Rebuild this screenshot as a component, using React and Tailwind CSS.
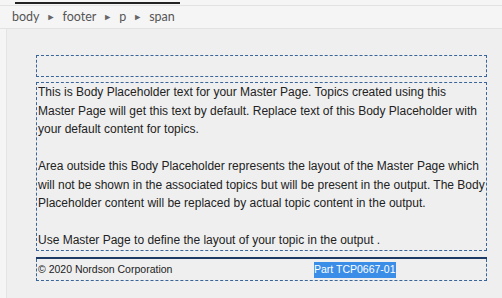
export default function App() {
  return (
    <div className="w-[502px] h-[298px] overflow-hidden bg-[#efefef] flex flex-col">
      <div className="h-[5px] bg-[#f5f5f5] pl-[15px] pt-[2px] shrink-0">
        <div className="w-[165px] h-[2px] bg-[#222]" />
      </div>
      <div className="h-[24px] shrink-0 bg-[#f5f5f5] border-y border-[#e2e2e2] flex items-center pl-[12px] gap-[7px] text-[12.5px] text-[#555] font-['Lato',sans-serif]">
        <span>body</span>
        <span className="text-[9px] text-[#666]">►</span>
        <span>footer</span>
        <span className="text-[9px] text-[#666]">►</span>
        <span>p</span>
        <span className="text-[9px] text-[#666]">►</span>
        <span>span</span>
      </div>
      <div className="flex flex-1">
        <div className="w-[7px] bg-[#f5f5f5] border-r border-[#e4e4e4] shrink-0" />
        <div className="pl-[29px] pt-[26px] flex flex-col font-['Liberation_Sans',Arial,sans-serif] text-[#222]">
          <div className="w-[451px] h-[22px] border border-dashed border-[#3a659a]" />
          <div className="w-[451px] mt-[5px] border border-dashed border-[#3a659a] pl-[1px] text-[12px] leading-[18.5px] whitespace-nowrap">
            <p>
              This is Body Placeholder text for your Master Page. Topics created using this
              <br />
              Master Page will get this text by default. Replace text of this Body Placeholder with
              <br />
              your default content for topics.
            </p>
            <br />
            <p>
              Area outside this Body Placeholder represents the layout of the Master Page which
              <br />
              will not be shown in the associated topics but will be present in the output. The Body
              <br />
              Placeholder content will be replaced by actual topic content in the output.
            </p>
            <br />
            <p>Use Master Page to define the layout of your topic in the output .</p>
          </div>
          <div className="w-[451px] mt-[6px] border-t-2 border-[#1c3a63]">
            <div className="h-[22px] pt-[2px] border-x border-b border-dashed border-[#3a659a] flex items-center pl-[1px] text-[10.5px] whitespace-nowrap">
              <span className="w-[276px]">© 2020 Nordson Corporation</span>
              <span className="bg-[#3b8ee8] text-white">Part TCP0667-01</span>
            </div>
          </div>
        </div>
      </div>
    </div>
  );
}
